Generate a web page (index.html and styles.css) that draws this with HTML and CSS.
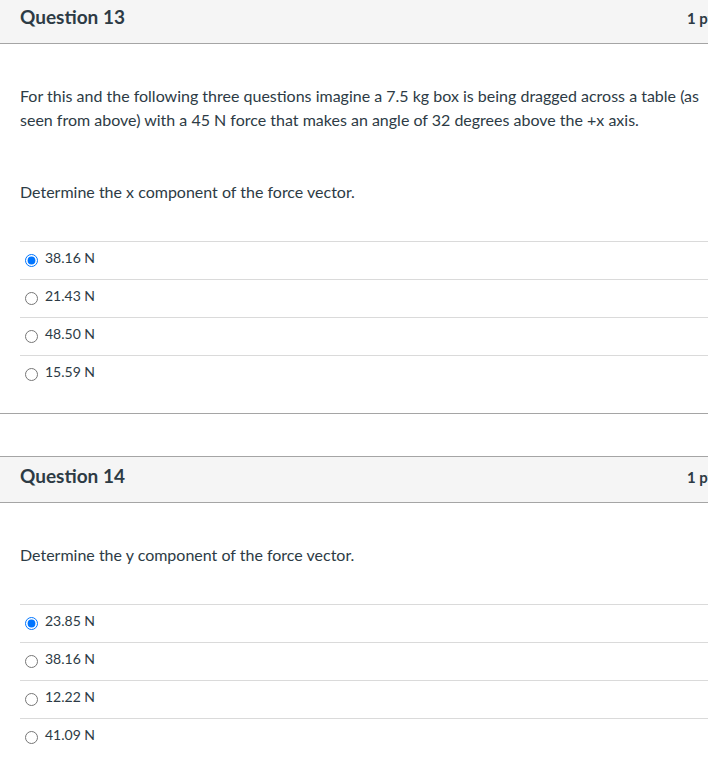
FILE: index.html
```html
<!DOCTYPE html>
<html>
<head>
<meta charset="utf-8">
<link rel="stylesheet" href="styles.css">
</head>
<body>
<div class="quiz">
  <section class="question first">
    <header class="q-header">
      <h2 class="q-title">Question 13</h2>
      <span class="q-points">1 pts</span>
    </header>
    <div class="q-body">
      <p class="q-text">For this and the following three questions imagine a 7.5 kg box is being dragged across a table (as seen from above) with a 45 N force that makes an angle of 32 degrees above the +x axis.</p>
      <p class="q-text q-prompt">Determine the x component of the force vector.</p>
      <div class="answers">
        <label class="answer"><input type="radio" name="q13" checked><span>38.16 N</span></label>
        <label class="answer"><input type="radio" name="q13"><span>21.43 N</span></label>
        <label class="answer"><input type="radio" name="q13"><span>48.50 N</span></label>
        <label class="answer"><input type="radio" name="q13"><span>15.59 N</span></label>
      </div>
    </div>
  </section>
  <section class="question">
    <header class="q-header">
      <h2 class="q-title">Question 14</h2>
      <span class="q-points">1 pts</span>
    </header>
    <div class="q-body">
      <p class="q-text">Determine the y component of the force vector.</p>
      <div class="answers">
        <label class="answer"><input type="radio" name="q14" checked><span>23.85 N</span></label>
        <label class="answer"><input type="radio" name="q14"><span>38.16 N</span></label>
        <label class="answer"><input type="radio" name="q14"><span>12.22 N</span></label>
        <label class="answer"><input type="radio" name="q14"><span>41.09 N</span></label>
      </div>
    </div>
  </section>
</div>
</body>
</html>
```

FILE: styles.css
```css
html, body {
  margin: 0;
  padding: 0;
  background: #fff;
  overflow: hidden;
}
body {
  font-family: Lato, "Open Sans", sans-serif;
  color: #2d3b45;
}
.quiz {
  width: 760px;
}
.question {
  border-top: 1px solid #a5a5a5;
  border-bottom: 1px solid #a5a5a5;
  margin-bottom: 42px;
}
.question.first {
  margin-top: -3px;
}
.q-header {
  display: flex;
  align-items: baseline;
  justify-content: space-between;
  box-sizing: border-box;
  height: 46px;
  padding: 7px 0 0 20px;
  background: #f5f5f5;
  border-bottom: 1px solid #a5a5a5;
}
.q-title {
  margin: 0;
  font-size: 19px;
  font-weight: 700;
  line-height: 24px;
}
.q-points {
  font-size: 15px;
  font-weight: 700;
  line-height: 24px;
  width: 73px;
}
.q-body {
  padding: 40px 0 20px 20px;
}
.q-text {
  margin: 0;
  font-size: 16px;
  line-height: 24px;
  width: 684px;
}
.q-prompt {
  margin-top: 48px;
}
.answers {
  margin-top: 37px;
}
.answer {
  display: flex;
  align-items: flex-start;
  box-sizing: border-box;
  height: 38px;
  padding-top: 7px;
  border-top: 1px solid #dadada;
  font-size: 14px;
  line-height: 18px;
}
.answer input {
  margin: 5px 7px 0 5px;
  width: 13px;
  height: 13px;
}
```
